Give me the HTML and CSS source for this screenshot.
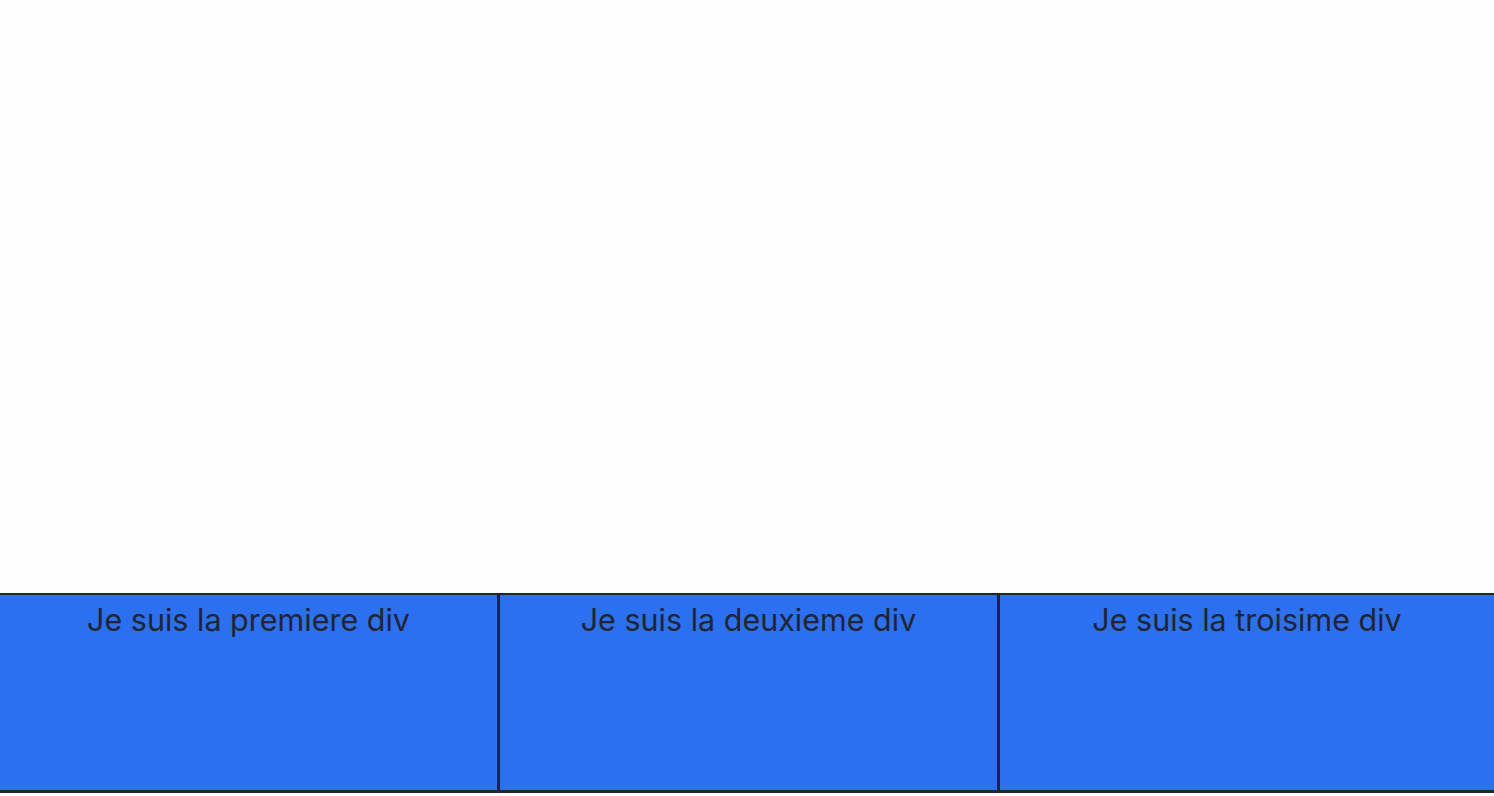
FILE: index.html
```html
<!DOCTYPE html>
<html lang="fr">
<head>
    <meta charset="UTF-8">
    <meta name="viewport" content="width=device-width, initial-scale=1.0">
    <title>Les trois div</title>
    <link rel="stylesheet" href="styles.css">
</head>
<body>
    <div class="main-content"></div>
    <div class="row">
        <div class="box">Je suis la premiere div</div>
        <div class="box">Je suis la deuxieme div</div>
        <div class="box">Je suis la troisime div</div>
    </div>
</body>
</html>
```

FILE: styles.css
```css
* {
    margin: 0;
    padding: 0;
    box-sizing: border-box;
}
body {
    display: flex;
    flex-direction: column;
    min-height: 100vh;
    background-color: #fefefe;
    font-family: Inter, "Liberation Sans", sans-serif;
    color: #23252a;
}
.main-content {
    flex: 1;
}
.row {
    display: flex;
    height: 200px;
    margin-bottom: 3px;
    border-top: 2px solid #23252a;
    border-bottom: 3px solid #23252a;
}
.box {
    flex: 1;
    background-color: #2a70f0;
    text-align: center;
    font-size: 30.5px;
    padding-top: 6px;
}
.box + .box {
    border-left: 3px solid #23252a;
}
.box:last-child {
    flex: 0 0 497px;
}
```
